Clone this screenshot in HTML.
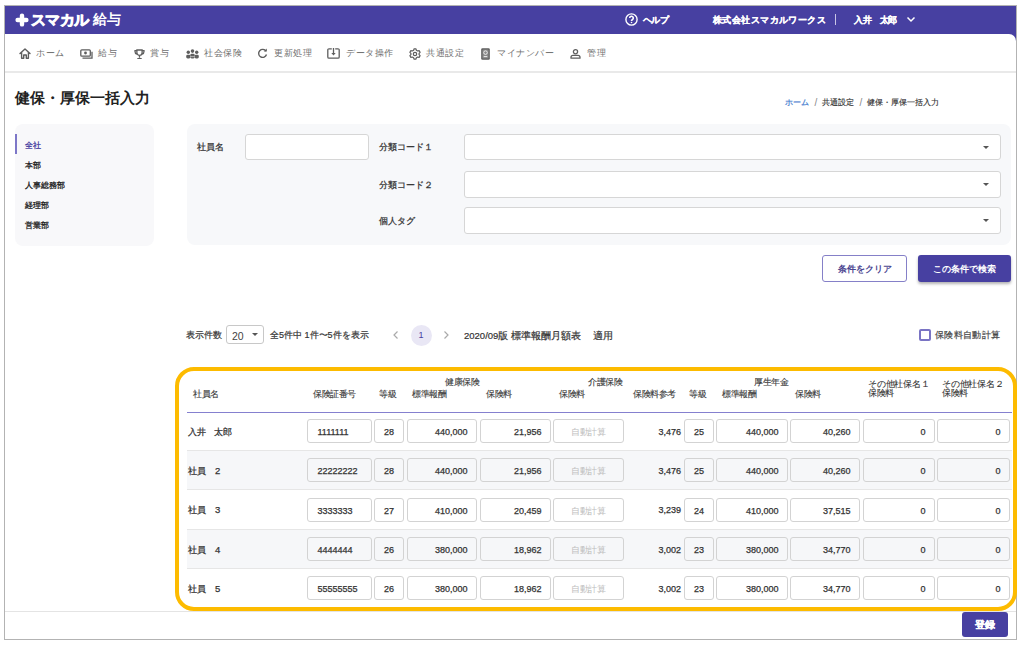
<!DOCTYPE html>
<html lang="ja">
<head>
<meta charset="utf-8">
<style>
*{box-sizing:border-box;margin:0;padding:0}
html,body{width:1024px;height:646px;overflow:hidden;background:#fff;font-family:"Liberation Sans",sans-serif;color:#333}
body{position:relative}
.a{position:absolute;white-space:nowrap}
#frame{left:4px;top:5px;width:1013px;height:635px;border:1px solid #b3b3b3}
#hdr{left:5px;top:6px;width:1011px;height:36px;background:#4740a1}
#nav{left:5px;top:34px;width:1011px;height:39px;background:#fff;border-top-right-radius:7px;border-bottom:2px solid #e9e9e9}
.logo{color:#fff;font-weight:bold}
.ht{color:#fff;font-size:9.5px;font-weight:bold;line-height:12px;-webkit-text-stroke:0.2px #fff}
.nv{font-size:9px;letter-spacing:0.55px;color:#707070;line-height:12px;top:47px}
.title{left:15px;top:88px;font-size:15px;font-weight:bold;color:#222;line-height:20px}
.bc{top:97px;font-size:8px;line-height:12px;color:#333;-webkit-text-stroke:0.15px #333}
#side{left:15px;top:124px;width:139px;height:122px;background:#f8f8fa;border-radius:8px}
.si{left:25px;font-size:8px;line-height:12px;color:#222;-webkit-text-stroke:0.3px #222}
#filter{left:187px;top:124px;width:824px;height:121px;background:#f7f8fa;border-radius:8px}
.fl{font-size:9px;color:#333;line-height:12px;-webkit-text-stroke:0.25px #333}
.box{background:#fff;border:1px solid #d6d6d6;border-radius:3px}
.dd{width:0;height:0;border-left:3.5px solid transparent;border-right:3.5px solid transparent;border-top:3.5px solid #555}
.btn{border-radius:3px;font-size:9px;font-weight:bold;text-align:center}
.ctl{font-size:9px;line-height:12px;color:#333;-webkit-text-stroke:0.2px #333}
#annot{left:175px;top:367px;width:842px;height:244px;border:4px solid #fdbb00;border-radius:19px}
.th{font-size:9px;letter-spacing:-0.5px;line-height:10px;color:#3a3a3a;-webkit-text-stroke:0.12px #3a3a3a}
#thline{left:187px;top:411.5px;width:825px;height:1px;background:#8580cf}
.rowbg{left:187px;width:825px;height:39px;background:#f6f7f9}
.rowln{left:187px;width:825px;height:1px;background:#e6e6e6}
.nm{left:188px;font-size:9px;letter-spacing:-0.3px;line-height:20px;color:#333;-webkit-text-stroke:0.25px #333}
.in{height:24px;background:transparent;border:1px solid #d3d3d3;border-radius:3px;font-size:9px;line-height:24px;color:#333;-webkit-text-stroke:0.25px #333;padding:0 8.5px 0 9.5px}
.in.r{text-align:right}
.in.l{text-align:left}
.in.c{text-align:center;padding:0}
.in.dis{color:#bdbdbd;-webkit-text-stroke:0;font-size:9px;letter-spacing:-0.4px;text-indent:-0.4px}
.ref{left:640px;width:41px;text-align:right;font-size:9px;line-height:23px;color:#333;-webkit-text-stroke:0.25px #333}
#foot{left:5px;top:611px;width:1011px;height:1px;background:#e4e4e4}

</style>
</head>
<body>
<div class="a" id="frame"></div>
<div class="a" id="hdr"></div>
<div class="a" id="nav"></div>
<!-- logo -->
<svg class="a" style="left:15px;top:13px" width="14" height="14" viewBox="0 0 14 14"><path d="M7 2.6 V11.4 M2.6 7 H11.4" stroke="#fff" stroke-width="4.4" stroke-linecap="round"/></svg>
<div class="a logo" style="left:31px;top:11px;font-size:15px;line-height:17px;letter-spacing:-0.6px;-webkit-text-stroke:0.8px #fff">スマカル</div>
<div class="a logo" style="left:93px;top:12px;font-size:13.5px;line-height:16px">給与</div>
<!-- header right -->
<svg class="a" style="left:625px;top:12.8px" width="13" height="13" viewBox="0 0 13 13"><circle cx="6.5" cy="6.5" r="5.6" fill="none" stroke="#fff" stroke-width="1.4"/><path d="M4.7 5.1a1.8 1.8 0 1 1 2.6 1.6c-.6.3-.8.6-.8 1.2" fill="none" stroke="#fff" stroke-width="1.6"/><circle cx="6.5" cy="9.5" r=".8" fill="#fff"/></svg>
<div class="a ht" style="left:643px;top:14px;font-size:9px;letter-spacing:-0.6px">ヘルプ</div>
<div class="a ht" style="left:713px;top:14px;font-size:9px;letter-spacing:0.42px">株式会社スマカルワークス</div>
<div class="a" style="left:835px;top:14px;width:1px;height:11px;background:#c9c6e6"></div>
<div class="a ht" style="left:854px;top:14px;font-size:9px;letter-spacing:-0.5px">入井　太郎</div>
<svg class="a" style="left:906px;top:16px" width="10" height="7" viewBox="0 0 10 7"><path d="M1.5 1.5 L5 5 L8.5 1.5" fill="none" stroke="#fff" stroke-width="1.5"/></svg>
<!-- nav -->
<svg class="a" style="left:19px;top:48px" width="12" height="11" viewBox="0 0 12 11"><path d="M1 5.6 L6 1 L11 5.6 M2.6 4.4 V10.2 H4.7 V7 H7.3 V10.2 H9.4 V4.4" fill="none" stroke="#5e5e5e" stroke-width="1.4" stroke-linejoin="round" stroke-linecap="round"/></svg>
<div class="a nv" style="left:36px">ホーム</div>
<svg class="a" style="left:80px;top:48.5px" width="13" height="10" viewBox="0 0 13 10"><rect x="0.8" y="0.8" width="9.5" height="6.4" rx="1" fill="none" stroke="#5e5e5e" stroke-width="1.3"/><circle cx="5.5" cy="4" r="1.4" fill="#5e5e5e"/><path d="M2.5 9.2 H12 V2.8" fill="none" stroke="#5e5e5e" stroke-width="1.3"/></svg>
<div class="a nv" style="left:98px">給与</div>
<svg class="a" style="left:133.5px;top:48.5px" width="11" height="10.5" viewBox="0 0 11 10.5"><path d="M2.9 1 H8.1 V3.8 A2.6 2.6 0 0 1 2.9 3.8 Z M2.9 1.6 H1 Q0.7 4.6 2.9 5.2 M8.1 1.6 H10 Q10.3 4.6 8.1 5.2 M5.5 6.4 V8.8 M3.3 9.6 H7.7" fill="none" stroke="#5e5e5e" stroke-width="1.3"/></svg>
<div class="a nv" style="left:150px">賞与</div>
<svg class="a" style="left:185.5px;top:48.5px" width="13" height="10" viewBox="0 0 13 10"><circle cx="6.5" cy="2.1" r="1.8" fill="#5e5e5e"/><circle cx="2.3" cy="3.3" r="1.7" fill="#5e5e5e"/><circle cx="10.7" cy="3.3" r="1.7" fill="#5e5e5e"/><rect x="4.3" y="4.7" width="4.4" height="4.8" rx="1.4" fill="#5e5e5e"/><rect x="0.2" y="5.8" width="4.2" height="3.7" rx="1.4" fill="#5e5e5e"/><rect x="8.6" y="5.8" width="4.2" height="3.7" rx="1.4" fill="#5e5e5e"/><path d="M4.1 7.6 H8.9" stroke="#fff" stroke-width="0.5"/></svg>
<div class="a nv" style="left:204px">社会保険</div>
<svg class="a" style="left:257px;top:48px" width="11" height="11" viewBox="0 0 11 11"><path d="M9 3.2 A4 4 0 1 0 9.5 6.5" fill="none" stroke="#5e5e5e" stroke-width="1.4"/><path d="M6.8 3.6 H9.8 V0.6 Z" fill="#5e5e5e"/></svg>
<div class="a nv" style="left:274px">更新処理</div>
<svg class="a" style="left:327px;top:48px" width="13" height="11" viewBox="0 0 13 11"><path d="M4.8 0.8 H2 Q0.8 0.8 0.8 2 V9 Q0.8 10.2 2 10.2 H11 Q12.2 10.2 12.2 9 V2 Q12.2 0.8 11 0.8 H8.2" fill="none" stroke="#5e5e5e" stroke-width="1.3"/><path d="M6.5 0 V6" stroke="#5e5e5e" stroke-width="1.3"/><path d="M4.3 5 L6.5 7.6 L8.7 5 Z" fill="#5e5e5e"/></svg>
<div class="a nv" style="left:346px">データ操作</div>
<svg class="a" style="left:408.5px;top:47.5px" width="12" height="12" viewBox="0 0 12 12"><path d="M5 0.9 H7 L7.4 2.3 L8.7 3 L10.1 2.6 L11.1 4.3 L10.1 5.3 V6.7 L11.1 7.7 L10.1 9.4 L8.7 9 L7.4 9.7 L7 11.1 H5 L4.6 9.7 L3.3 9 L1.9 9.4 L0.9 7.7 L1.9 6.7 V5.3 L0.9 4.3 L1.9 2.6 L3.3 3 L4.6 2.3 Z" fill="none" stroke="#5e5e5e" stroke-width="1.2" stroke-linejoin="round"/><circle cx="6" cy="6" r="1.7" fill="none" stroke="#5e5e5e" stroke-width="1.2"/></svg>
<div class="a nv" style="left:426px">共通設定</div>
<svg class="a" style="left:481px;top:47.5px" width="9" height="12" viewBox="0 0 9 12"><rect x="0.2" y="0.2" width="8.6" height="11.6" rx="1.3" fill="#5c5c5c"/><rect x="1.4" y="1.4" width="6.2" height="9.2" rx="0.6" fill="#8a8a8a"/><circle cx="4.5" cy="4.6" r="1.8" fill="none" stroke="#eee" stroke-width="1"/><path d="M2.7 8.6 H6.3" stroke="#eee" stroke-width="1"/></svg>
<div class="a nv" style="left:497px">マイナンバー</div>
<svg class="a" style="left:569.5px;top:48.5px" width="11" height="10" viewBox="0 0 11 10"><circle cx="5.5" cy="2.8" r="2.1" fill="none" stroke="#5e5e5e" stroke-width="1.3"/><path d="M1 9.2 V8.3 Q1 6.4 3 6.4 H8 Q10 6.4 10 8.3 V9.2 Z" fill="none" stroke="#5e5e5e" stroke-width="1.3" stroke-linejoin="round"/></svg>
<div class="a nv" style="left:587px">管理</div>
<!-- title & breadcrumb -->
<div class="a title">健保・厚保一括入力</div>
<div class="a bc" style="left:785px;color:#4a7fd0;-webkit-text-stroke:0.25px #4a7fd0">ホーム</div>
<div class="a bc" style="left:814.5px;color:#888;font-size:10px;-webkit-text-stroke:0">/</div>
<div class="a bc" style="left:822px">共通設定</div>
<div class="a bc" style="left:859.5px;color:#888;font-size:10px;-webkit-text-stroke:0">/</div>
<div class="a bc" style="left:867px">健保・厚保一括入力</div>
<!-- sidebar -->
<div class="a" id="side"></div>
<div class="a" style="left:15px;top:134px;width:1.5px;height:20px;background:#7d77c8"></div>
<div class="a si" style="top:140px;color:#4740a1;-webkit-text-stroke:0.3px #4740a1">全社</div>
<div class="a si" style="top:159.5px">本部</div>
<div class="a si" style="top:179.5px">人事総務部</div>
<div class="a si" style="top:199.5px">経理部</div>
<div class="a si" style="top:220px">営業部</div>
<!-- filter -->
<div class="a" id="filter"></div>
<div class="a fl" style="left:197px;top:141px">社員名</div>
<div class="a box" style="left:245px;top:134px;width:124px;height:26px"></div>
<div class="a fl" style="left:379px;top:140.5px">分類コード１</div>
<div class="a box" style="left:464px;top:134px;width:537px;height:26px"></div>
<div class="a dd" style="left:983px;top:145.5px"></div>
<div class="a fl" style="left:379px;top:178.5px">分類コード２</div>
<div class="a box" style="left:464px;top:171px;width:537px;height:27px"></div>
<div class="a dd" style="left:983px;top:183px"></div>
<div class="a fl" style="left:379px;top:215px">個人タグ</div>
<div class="a box" style="left:464px;top:207px;width:537px;height:27px"></div>
<div class="a dd" style="left:983px;top:219px"></div>
<!-- buttons -->
<div class="a btn" style="left:822px;top:255px;width:85px;height:27px;border:1px solid #7a74c4;color:#4a4590;line-height:27px;background:#fff;border-color:#8580c8">条件をクリア</div>
<div class="a btn" style="left:918px;top:255px;width:93px;height:27px;background:#4740a1;color:#fff;line-height:28px;box-shadow:0 2px 3px rgba(0,0,0,.3)">この条件で検索</div>
<!-- controls -->
<div class="a ctl" style="left:186px;top:329px">表示件数</div>
<div class="a box" style="left:226px;top:325px;width:38px;height:19px;border-color:#c8c8c8"></div>
<div class="a ctl" style="left:232px;top:329.5px;font-size:10.5px;-webkit-text-stroke:0;color:#444">20</div>
<div class="a dd" style="left:252px;top:333px"></div>
<div class="a ctl" style="left:270px;top:329px">全5件中 1件〜5件を表示</div>
<svg class="a" style="left:392px;top:330px" width="8" height="10" viewBox="0 0 8 10"><path d="M5.5 1.5 L2 5 L5.5 8.5" fill="none" stroke="#aaa" stroke-width="1.2"/></svg>
<div class="a" style="left:410.5px;top:324.5px;width:21px;height:21px;border-radius:50%;background:#e9e7f5;color:#4740a1;font-size:9px;line-height:21px;text-align:center">1</div>
<svg class="a" style="left:442px;top:330px" width="8" height="10" viewBox="0 0 8 10"><path d="M2.5 1.5 L6 5 L2.5 8.5" fill="none" stroke="#aaa" stroke-width="1.2"/></svg>
<div class="a ctl" style="left:464px;top:330px;font-size:9.5px">2020/09版 標準報酬月額表</div>
<div class="a ctl" style="left:593px;top:330px;font-size:9.5px">適用</div>
<div class="a" style="left:919px;top:328.5px;width:12px;height:12px;border:2px solid #7a74c4;border-radius:2px"></div>
<div class="a ctl" style="left:935px;top:329px;color:#555;font-size:9px;letter-spacing:0.33px">保険料自動計算</div>
<!-- table header -->
<div class="a th" style="left:193px;top:389px">社員名</div>
<div class="a th" style="left:313px;top:389px">保険証番号</div>
<div class="a th" style="left:379px;top:389px">等級</div>
<div class="a th" style="left:445px;top:377px">健康保険</div>
<div class="a th" style="left:412px;top:389px">標準報酬</div>
<div class="a th" style="left:486px;top:389px">保険料</div>
<div class="a th" style="left:588px;top:377px">介護保険</div>
<div class="a th" style="left:559px;top:389px">保険料</div>
<div class="a th" style="left:633px;top:389px">保険料参考</div>
<div class="a th" style="left:689px;top:389px">等級</div>
<div class="a th" style="left:754px;top:377px">厚生年金</div>
<div class="a th" style="left:722px;top:389px">標準報酬</div>
<div class="a th" style="left:795px;top:389px">保険料</div>
<div class="a th" style="left:868px;top:378.5px;letter-spacing:-0.25px;-webkit-text-stroke:0.1px #333;color:#333">その他社保名１</div>
<div class="a th" style="left:868px;top:388px;-webkit-text-stroke:0.1px #333;color:#333">保険料</div>
<div class="a th" style="left:942px;top:378.5px;letter-spacing:-0.25px;-webkit-text-stroke:0.1px #333;color:#333">その他社保名２</div>
<div class="a th" style="left:942px;top:388px;-webkit-text-stroke:0.1px #333;color:#333">保険料</div>
<div class="a" id="thline"></div>
<!-- footer -->
<div class="a" id="foot"></div>
<div class="a btn" style="left:962px;top:612px;width:46px;height:25px;background:#4740a1;color:#fff;line-height:25px;font-size:9.5px;-webkit-text-stroke:0.3px #fff">登録</div>
<div class="a" id="annot"></div>

<div class="a nm" style="top:422px">入井　太郎</div>
<div class="a in l" style="left:307px;top:419.3px;width:65px">1111111</div>
<div class="a in c" style="left:374px;top:419.3px;width:30px">28</div>
<div class="a in r" style="left:407px;top:419.3px;width:70px">440,000</div>
<div class="a in r" style="left:480px;top:419.3px;width:71px">21,956</div>
<div class="a in c dis" style="left:553px;top:419.3px;width:71px">自動計算</div>
<div class="a ref" style="top:421px">3,476</div>
<div class="a in c" style="left:684px;top:419.3px;width:30px">25</div>
<div class="a in r" style="left:716px;top:419.3px;width:72px">440,000</div>
<div class="a in r" style="left:790px;top:419.3px;width:70px">40,260</div>
<div class="a in r" style="left:863px;top:419.3px;width:72px">0</div>
<div class="a in r" style="left:937px;top:419.3px;width:73px">0</div>
<div class="a rowbg" style="top:451px"></div>
<div class="a rowln" style="top:450px"></div>
<div class="a nm" style="top:461px">社員　<span style="margin-left:1px;font-size:9.5px">2</span></div>
<div class="a in l" style="left:307px;top:458.3px;width:65px">22222222</div>
<div class="a in c" style="left:374px;top:458.3px;width:30px">28</div>
<div class="a in r" style="left:407px;top:458.3px;width:70px">440,000</div>
<div class="a in r" style="left:480px;top:458.3px;width:71px">21,956</div>
<div class="a in c dis" style="left:553px;top:458.3px;width:71px">自動計算</div>
<div class="a ref" style="top:460px">3,476</div>
<div class="a in c" style="left:684px;top:458.3px;width:30px">25</div>
<div class="a in r" style="left:716px;top:458.3px;width:72px">440,000</div>
<div class="a in r" style="left:790px;top:458.3px;width:70px">40,260</div>
<div class="a in r" style="left:863px;top:458.3px;width:72px">0</div>
<div class="a in r" style="left:937px;top:458.3px;width:73px">0</div>
<div class="a rowln" style="top:489.2px"></div>
<div class="a nm" style="top:500.2px">社員　<span style="margin-left:1px;font-size:9.5px">3</span></div>
<div class="a in l" style="left:307px;top:497.5px;width:65px">3333333</div>
<div class="a in c" style="left:374px;top:497.5px;width:30px">27</div>
<div class="a in r" style="left:407px;top:497.5px;width:70px">410,000</div>
<div class="a in r" style="left:480px;top:497.5px;width:71px">20,459</div>
<div class="a in c dis" style="left:553px;top:497.5px;width:71px">自動計算</div>
<div class="a ref" style="top:499.2px">3,239</div>
<div class="a in c" style="left:684px;top:497.5px;width:30px">24</div>
<div class="a in r" style="left:716px;top:497.5px;width:72px">410,000</div>
<div class="a in r" style="left:790px;top:497.5px;width:70px">37,515</div>
<div class="a in r" style="left:863px;top:497.5px;width:72px">0</div>
<div class="a in r" style="left:937px;top:497.5px;width:73px">0</div>
<div class="a rowbg" style="top:529.5px"></div>
<div class="a rowln" style="top:528.5px"></div>
<div class="a nm" style="top:539.5px">社員　<span style="margin-left:1px;font-size:9.5px">4</span></div>
<div class="a in l" style="left:307px;top:536.8px;width:65px">4444444</div>
<div class="a in c" style="left:374px;top:536.8px;width:30px">26</div>
<div class="a in r" style="left:407px;top:536.8px;width:70px">380,000</div>
<div class="a in r" style="left:480px;top:536.8px;width:71px">18,962</div>
<div class="a in c dis" style="left:553px;top:536.8px;width:71px">自動計算</div>
<div class="a ref" style="top:538.5px">3,002</div>
<div class="a in c" style="left:684px;top:536.8px;width:30px">23</div>
<div class="a in r" style="left:716px;top:536.8px;width:72px">380,000</div>
<div class="a in r" style="left:790px;top:536.8px;width:70px">34,770</div>
<div class="a in r" style="left:863px;top:536.8px;width:72px">0</div>
<div class="a in r" style="left:937px;top:536.8px;width:73px">0</div>
<div class="a rowln" style="top:567.8px"></div>
<div class="a nm" style="top:578.8px">社員　<span style="margin-left:1px;font-size:9.5px">5</span></div>
<div class="a in l" style="left:307px;top:576.0999999999999px;width:65px">55555555</div>
<div class="a in c" style="left:374px;top:576.0999999999999px;width:30px">26</div>
<div class="a in r" style="left:407px;top:576.0999999999999px;width:70px">380,000</div>
<div class="a in r" style="left:480px;top:576.0999999999999px;width:71px">18,962</div>
<div class="a in c dis" style="left:553px;top:576.0999999999999px;width:71px">自動計算</div>
<div class="a ref" style="top:577.8px">3,002</div>
<div class="a in c" style="left:684px;top:576.0999999999999px;width:30px">23</div>
<div class="a in r" style="left:716px;top:576.0999999999999px;width:72px">380,000</div>
<div class="a in r" style="left:790px;top:576.0999999999999px;width:70px">34,770</div>
<div class="a in r" style="left:863px;top:576.0999999999999px;width:72px">0</div>
<div class="a in r" style="left:937px;top:576.0999999999999px;width:73px">0</div>
</body>
</html>
